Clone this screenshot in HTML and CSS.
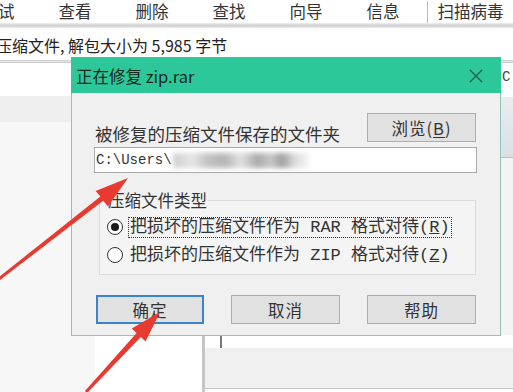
FILE: index.html
```html
<!DOCTYPE html>
<html lang="zh-CN">
<head>
    <meta charset="UTF-8">
    <meta name="viewport" content="width=device-width, initial-scale=1.0">
    <title>正在修复 zip.rar</title>
    <link rel="stylesheet" href="styles.css">
</head>
<body>
    <div class="app">
        <div class="toolbar">
            <span class="tool first">试</span>
            <span class="tool">查看</span>
            <span class="tool">删除</span>
            <span class="tool">查找</span>
            <span class="tool">向导</span>
            <span class="tool">信息</span>
            <span class="tool-sep"></span>
            <span class="tool">扫描病毒</span>
        </div>
        <div class="bar-line"></div>
        <div class="status">压缩文件, 解包大小为 5,985 字节</div>
        <div class="status-line"></div>
        <div class="main">
            <div class="pane-left">
                <div class="pl-head"></div>
                <div class="pl-band"></div>
                <div class="pl-body">
                    <div class="pl-tree"></div>
                    <div class="pl-list"></div>
                </div>
            </div>
            <div class="pane-right">
                <div class="pr-top">C:\</div>
                <div class="pr-band"></div>
                <div class="pr-mid"></div>
                <div class="pr-strip"><span class="caret"></span></div>
                <div class="pr-bottom"></div>
            </div>
        </div>
    </div>

    <div class="dialog">
        <div class="titlebar">
            <span class="title">正在修复 zip.rar</span>
            <svg class="close" width="14" height="14" viewBox="0 0 14 14">
                <path d="M1 1 L13 13 M13 1 L1 13" stroke="#1f5f48" stroke-width="1.4" fill="none"/>
            </svg>
        </div>
        <div class="dialog-body">
            <div class="folder-row">
                <span class="folder-label">被修复的压缩文件保存的文件夹</span>
                <button class="btn">浏览(<u>B</u>)</button>
            </div>
            <div class="path-input">C:\Users\<span class="smudge"></span></div>
            <fieldset class="type-group">
                <legend>压缩文件类型</legend>
                <div class="radio-row">
                    <span class="radio checked"></span>
                    <span class="radio-text focus">把损坏的压缩文件作为 RAR 格式对待(<u>R</u>)</span>
                </div>
                <div class="radio-row">
                    <span class="radio"></span>
                    <span class="radio-text">把损坏的压缩文件作为 ZIP 格式对待(<u>Z</u>)</span>
                </div>
            </fieldset>
            <div class="button-row">
                <button class="btn default">确定</button>
                <button class="btn">取消</button>
                <button class="btn">帮助</button>
            </div>
        </div>
    </div>

    <!-- red annotation arrows -->
    <svg class="arrows" width="513" height="392" viewBox="0 0 513 392">
        <polygon points="-5.9,280.8 100.4,196.6 95.6,191.0 128,178 108.0,206.4 103.2,200.8 -4.1,283.2" fill="#e83a30"/>
        <polygon points="84.9,391 136.6,333.1 131.8,328.6 160,312 145.6,341.4 140.8,336.9 87.1,393" fill="#e83a30"/>
    </svg>
</body>
</html>
```

FILE: styles.css
```css
html, body {
    margin: 0;
    padding: 0;
    width: 513px;
    height: 392px;
    overflow: hidden;
}
body {
    position: relative;
    font-family: "Noto Sans CJK SC", sans-serif;
    background-color: #ffffff;
    color: #2b2b2b;
}
.app {
    display: flex;
    flex-direction: column;
    height: 392px;
}
.toolbar {
    display: flex;
    align-items: center;
    gap: 44px;
    height: 23px;
    font-size: 16.5px;
    line-height: 23px;
    color: #333;
    white-space: nowrap;
}
.toolbar .first {
    margin-left: -2px;
}
.tool-sep {
    width: 1px;
    height: 22px;
    background-color: #b9b9b9;
    margin: 0 -34px 0 -17px;
}
.bar-line {
    height: 5px;
    background: linear-gradient(#f0f0f0, #d4d4d4 40%, #d4d4d4 60%, #eeeeee);
}
.status {
    height: 32px;
    line-height: 34px;
    font-size: 16px;
    color: #222;
    margin-left: -4px;
    white-space: nowrap;
}
.status-line {
    height: 3px;
    background: linear-gradient(#c9c9c9, #e4e4e4 50%, #c4c4c4);
}
.main {
    flex: 1;
    display: flex;
}
.pane-left {
    width: 202px;
    flex-shrink: 0;
    display: flex;
    flex-direction: column;
    border-right: 3px solid #c6c6c6;
}
.pl-head {
    height: 33px;
    background-color: #fff;
}
.pl-band {
    height: 26px;
    background-color: #efefef;
}
.pl-body {
    flex: 1;
    display: flex;
}
.pl-tree {
    width: 95px;
    background-color: #f7f7f7;
}
.pl-list {
    flex: 1;
    background-color: #fff;
}
.pane-right {
    flex: 1;
    min-width: 0;
    display: flex;
    flex-direction: column;
}
.pr-top {
    height: 34px;
    padding-left: 297px;
    font-family: "Liberation Mono", monospace;
    font-size: 14px;
    line-height: 28px;
    color: #444;
    white-space: nowrap;
    overflow: hidden;
}
.pr-band {
    height: 60px;
    background: linear-gradient(#e9edf2, #d9e0e8);
    border-bottom: 1px solid #b7bec6;
}
.pr-mid {
    height: 177px;
    background-color: #f4f4f4;
}
.pr-strip {
    height: 13px;
    margin-left: 15px;
    background-color: #fff;
}
.caret {
    display: block;
    width: 2px;
    height: 13px;
    background-color: #777;
}
.pr-bottom {
    flex: 1;
    background-color: #f0f0f0;
    border-bottom: 1px solid #c4c4c4;
    margin-bottom: 3px;
}

/* dialog window */
.dialog {
    position: absolute;
    left: 71px;
    top: 57px;
    width: 430px;
    height: 279px;
    box-sizing: border-box;
    border: 1px solid #93c2b1;
    border-top: none;
    background-color: #f0f0f0;
    display: flex;
    flex-direction: column;
}
.titlebar {
    height: 36px;
    margin: 0 -1px;
    background-color: #2cc89a;
    display: flex;
    align-items: center;
    padding: 2px 0 0 5px;
    box-sizing: border-box;
}
.title {
    flex: 1;
    font-size: 16.5px;
    color: #17281f;
}
.close {
    margin-right: 18px;
}
.dialog-body {
    padding: 20px 23px 0 22px;
    display: flex;
    flex-direction: column;
}
.folder-row {
    display: flex;
    justify-content: space-between;
    align-items: flex-end;
}
.folder-label {
    font-size: 17.5px;
    line-height: 20px;
    margin: 0 0 -2px 1px;
    color: #333;
}
.btn {
    width: 109px;
    height: 29px;
    padding: 0;
    font-family: "Noto Sans CJK SC", sans-serif;
    font-size: 16.5px;
    color: #333;
    background-color: #e1e1e1;
    border: 1px solid #adadad;
    border-radius: 0;
    letter-spacing: 1px;
}
.folder-row .btn {
    margin-right: 1px;
}
.btn u {
    text-underline-offset: 2px;
}
.btn.default {
    width: 108px;
    border: 2px solid #3a84c8;
}
.path-input {
    margin-top: 5px;
    height: 26px;
    box-sizing: border-box;
    border: 1px solid #a9a9a9;
    background-color: #fff;
    padding-left: 1px;
    font-family: "Liberation Mono", monospace;
    font-size: 14px;
    line-height: 24px;
    color: #333;
    white-space: nowrap;
    display: flex;
    align-items: center;
}
.smudge {
    display: inline-block;
    width: 136px;
    height: 15px;
    margin-left: 1px;
    filter: blur(2.5px);
    background: linear-gradient(90deg, #cfcfcf 0, #e6e6e6 14%, #c2c2c2 26%, #b5b5b5 38%, #e2e2e2 50%, #a9a9a9 62%, #c9c9c9 72%, #9f9f9f 80%, #dedede 90%, #f4f4f4 100%);
}
.type-group {
    margin: 18px 1px 0 5px;
    padding: 4px 10px 5px 7px;
    border: 1px solid #dadada;
    background-color: #f4f4f4;
}
.type-group legend {
    padding: 0 1px;
    font-size: 16.5px;
    line-height: 18px;
    color: #333;
}
.radio-row {
    height: 28px;
    display: flex;
    align-items: center;
}
.radio {
    width: 16px;
    height: 16px;
    box-sizing: border-box;
    margin-left: 0;
    border: 1px solid #333;
    border-radius: 50%;
    background-color: #fff;
    display: flex;
    align-items: center;
    justify-content: center;
}
.radio.checked::after {
    content: "";
    width: 8px;
    height: 8px;
    border-radius: 50%;
    background-color: #1a1a1a;
}
.radio-text {
    margin-left: 5px;
    padding: 0 1px;
    border: 1px dotted transparent;
    font-family: "Liberation Mono", "Noto Sans CJK SC", monospace;
    font-size: 17px;
    line-height: 19px;
    color: #333;
    white-space: nowrap;
}
.radio-text.focus {
    border-color: #333;
}
.button-row {
    margin-top: 20px;
    padding: 0 1px 0 2px;
    display: flex;
    justify-content: space-between;
}

.arrows {
    position: absolute;
    left: 0;
    top: 0;
    pointer-events: none;
}
```
